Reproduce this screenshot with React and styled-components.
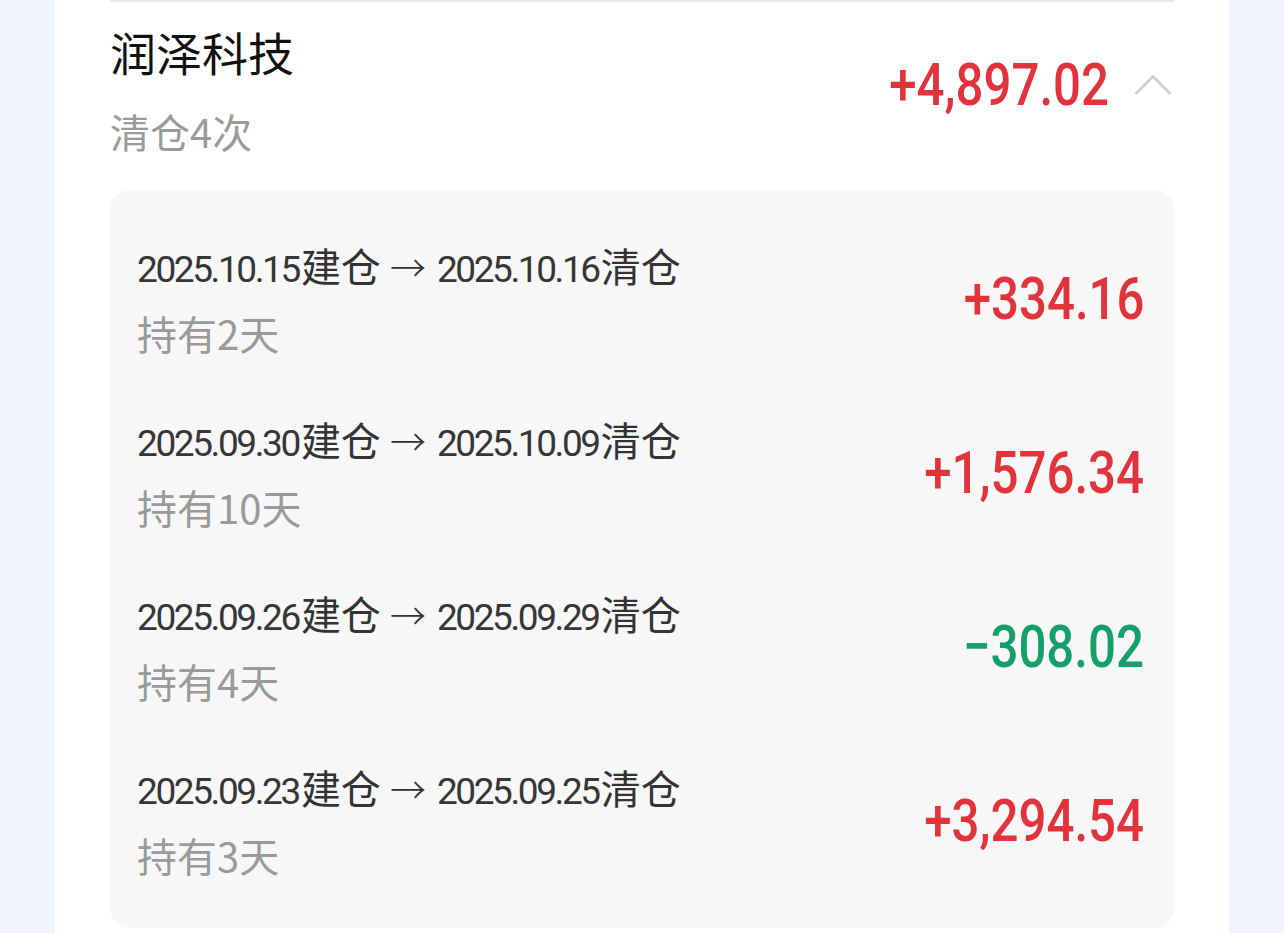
import React from "react";
import styled, { createGlobalStyle } from "styled-components";

const Global = createGlobalStyle`
  html, body { margin: 0; padding: 0; background: #f2f5fd; }
  body { font-family: "Noto Sans CJK SC", "Noto Sans", sans-serif; }
`;

const Page = styled.div`
  width: 1284px;
  height: 933px;
  overflow: hidden;
  background: #f2f5fd;
  padding: 0 55px;
  box-sizing: border-box;
`;

const Card = styled.div`
  background: #fff;
  height: 100%;
  padding: 0 55px;
`;

const Item = styled.section`
  border-top: 2px solid #e8e8e8;
`;

const Header = styled.div`
  display: flex;
  align-items: center;
  justify-content: space-between;
  padding: 19px 0 33px;
`;

const Titles = styled.div`
  display: flex;
  flex-direction: column;
  gap: 24px;
`;

const Title = styled.div`
  font-size: 46px;
  line-height: 60px;
  color: #111;
  font-family: "Noto Sans CJK SC", sans-serif;
`;

const Sub = styled.div`
  font-size: 40px;
  line-height: 52px;
  color: #9a9a9a;
  font-family: "Noto Sans CJK SC", sans-serif;
`;

const Right = styled.div`
  display: flex;
  align-items: center;
  gap: 26px;
  margin-bottom: 8px;
  padding-right: 3px;
`;

const Amount = styled.div`
  font-family: "Roboto", sans-serif;
  font-size: 60px;
  line-height: 60px;
  font-weight: 500;
  white-space: nowrap;
  color: ${(p) => (p.$neg ? "#13a06b" : "#e2323b")};
  transform: scaleX(0.82);
  transform-origin: right center;
`;

const Panel = styled.div`
  background: #f7f7f7;
  border-radius: 20px;
  padding: 22px 30px 20px 27px;
`;

const Row = styled.div`
  display: flex;
  align-items: center;
  justify-content: space-between;
  padding: 28px 0;
`;

const RowText = styled.div`
  display: flex;
  flex-direction: column;
  gap: 18px;
`;

const DateLine = styled.div`
  display: flex;
  align-items: baseline;
  height: 50px;
  font-size: 40px;
  line-height: 50px;
  color: #333;
  white-space: nowrap;
  font-family: "Noto Sans CJK SC", sans-serif;
`;

const Num = styled.span`
  font-family: "Roboto", sans-serif;
  font-size: 37px;
  line-height: 50px;
  letter-spacing: -2.4px;
  margin-right: 2px;
  color: #363636;
`;

const Arrow = styled.span`
  font-family: "Noto Sans CJK SC", sans-serif;
  font-weight: 300;
  font-size: 36px;
  line-height: 50px;
  margin: 0 11px 0 9px;
`;

const Hold = styled(Sub)`
  line-height: 50px;
`;

const Chevron = () => (
  <svg width="36" height="20" viewBox="0 0 36 20" fill="none">
    <path d="M1.5 18 L18 1.5 L34.5 18" stroke="#d0d0d0" strokeWidth="3" strokeLinecap="round" strokeLinejoin="round" />
  </svg>
);

const rows = [
  { from: "2025.10.15", to: "2025.10.16", days: 2, amt: "+334.16" },
  { from: "2025.09.30", to: "2025.10.09", days: 10, amt: "+1,576.34" },
  { from: "2025.09.26", to: "2025.09.29", days: 4, amt: "−308.02", neg: true },
  { from: "2025.09.23", to: "2025.09.25", days: 3, amt: "+3,294.54" },
];

export default function App() {
  return (
    <>
      <Global />
      <Page>
        <Card>
          <Item>
            <Header>
              <Titles>
                <Title>润泽科技</Title>
                <Sub>清仓4次</Sub>
              </Titles>
              <Right>
                <Amount>+4,897.02</Amount>
                <Chevron />
              </Right>
            </Header>
            <Panel>
              {rows.map((r) => (
                <Row key={r.from}>
                  <RowText>
                    <DateLine>
                      <Num>{r.from}</Num>
                      <span>建仓</span>
                      <Arrow>→</Arrow>
                      <Num>{r.to}</Num>
                      <span>清仓</span>
                    </DateLine>
                    <Hold>持有{r.days}天</Hold>
                  </RowText>
                  <Amount $neg={r.neg}>{r.amt}</Amount>
                </Row>
              ))}
            </Panel>
          </Item>
        </Card>
      </Page>
    </>
  );
}
